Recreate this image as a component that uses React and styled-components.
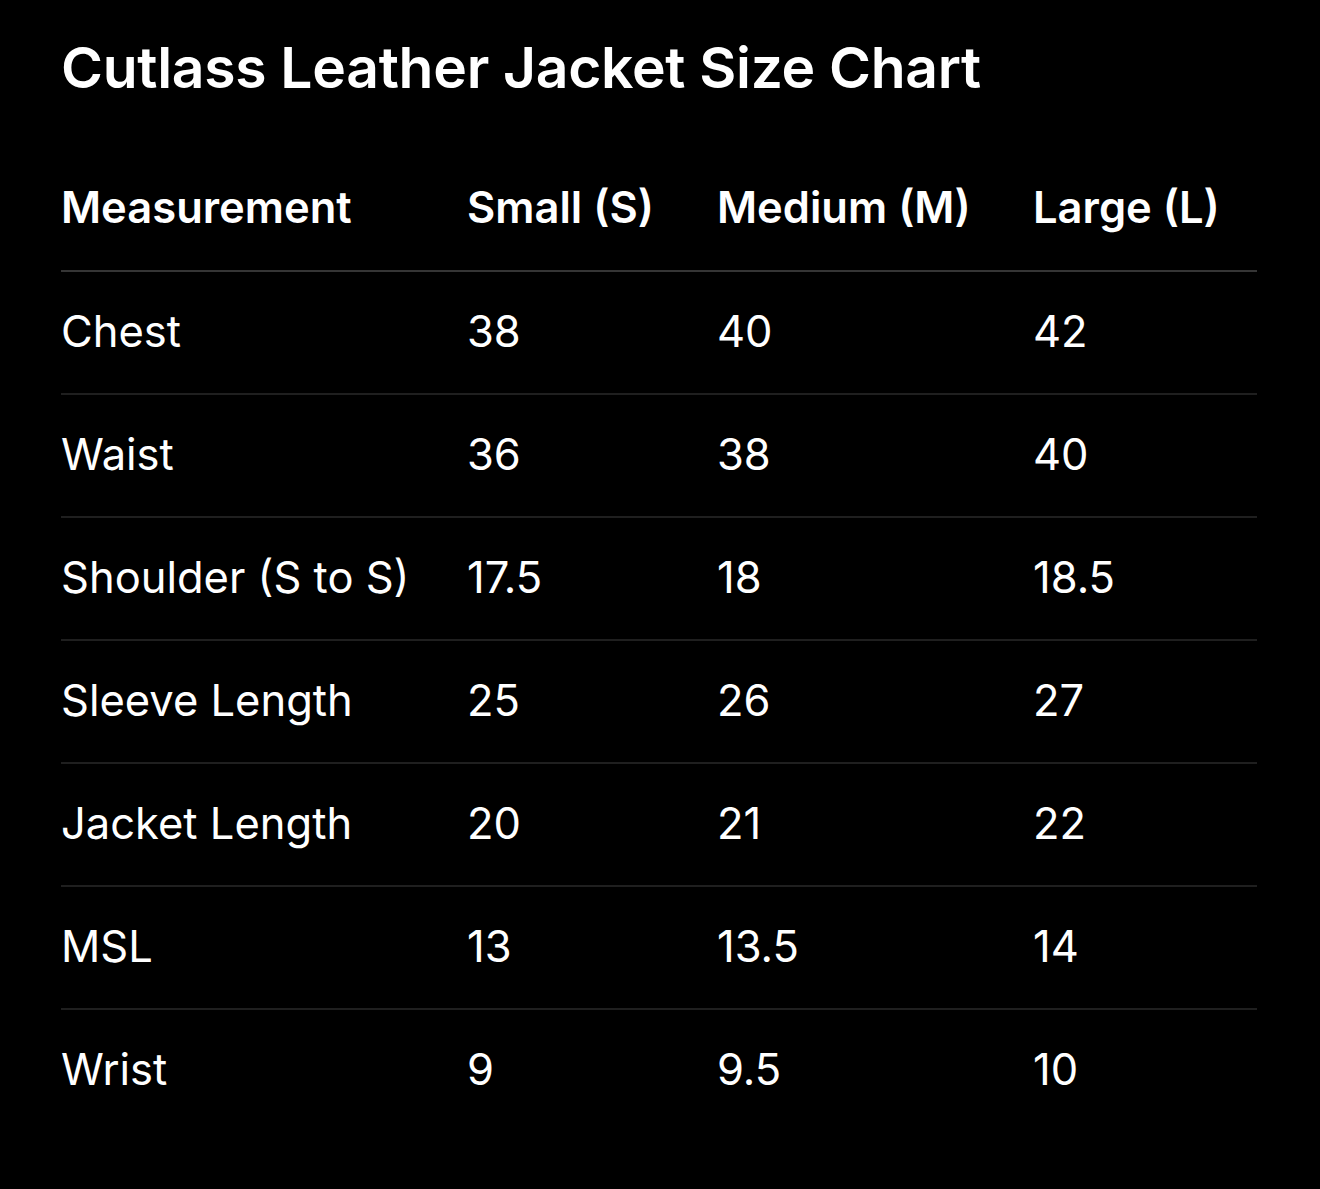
import React from 'react';
import styled, { createGlobalStyle } from 'styled-components';

const GlobalStyle = createGlobalStyle`
  html, body {
    margin: 0;
    padding: 0;
    background: #000;
  }
  body {
    font-family: Inter, "Noto Sans", "Liberation Sans", sans-serif;
    color: #fff;
  }
`;

const Page = styled.div`
  background: #000;
  min-height: 1189px;
  padding: 32px 63px 0 61px;
  box-sizing: border-box;
`;

const Title = styled.h1`
  margin: 0;
  font-size: 57px;
  font-weight: 600;
  line-height: 72px;
  letter-spacing: -0.3px;
`;

const Table = styled.table`
  width: 1196px;
  margin-top: 44px;
  border-collapse: collapse;
  table-layout: fixed;
`;

const HeadCell = styled.th`
  text-align: left;
  font-size: 43.5px;
  font-weight: 600;
  height: 118px;
  padding: 0 0 4px 0;
  vertical-align: middle;
  border-bottom: 2px solid #353535;
`;

const Row = styled.tr`
  border-bottom: 2px solid ${(p) => (p.$last ? 'transparent' : '#1f1f1f')};
`;

const Cell = styled.td`
  font-size: 43.5px;
  font-weight: 400;
  height: 117px;
  padding: 0 0 4px 0;
  vertical-align: middle;
`;

const columns = ['Measurement', 'Small (S)', 'Medium (M)', 'Large (L)'];
const widths = [406, 250, 316, 224];

const rows = [
  ['Chest', '38', '40', '42'],
  ['Waist', '36', '38', '40'],
  ['Shoulder (S to S)', '17.5', '18', '18.5'],
  ['Sleeve Length', '25', '26', '27'],
  ['Jacket Length', '20', '21', '22'],
  ['MSL', '13', '13.5', '14'],
  ['Wrist', '9', '9.5', '10'],
];

export default function App() {
  return (
    <Page>
      <GlobalStyle />
      <Title>Cutlass Leather Jacket Size Chart</Title>
      <Table>
        <colgroup>
          {widths.map((w, i) => (
            <col key={i} style={{ width: w }} />
          ))}
        </colgroup>
        <thead>
          <tr>
            {columns.map((c) => (
              <HeadCell key={c}>{c}</HeadCell>
            ))}
          </tr>
        </thead>
        <tbody>
          {rows.map((r, i) => (
            <Row key={r[0]} $last={i === rows.length - 1}>
              {r.map((v, j) => (
                <Cell key={j}>{v}</Cell>
              ))}
            </Row>
          ))}
        </tbody>
      </Table>
    </Page>
  );
}
